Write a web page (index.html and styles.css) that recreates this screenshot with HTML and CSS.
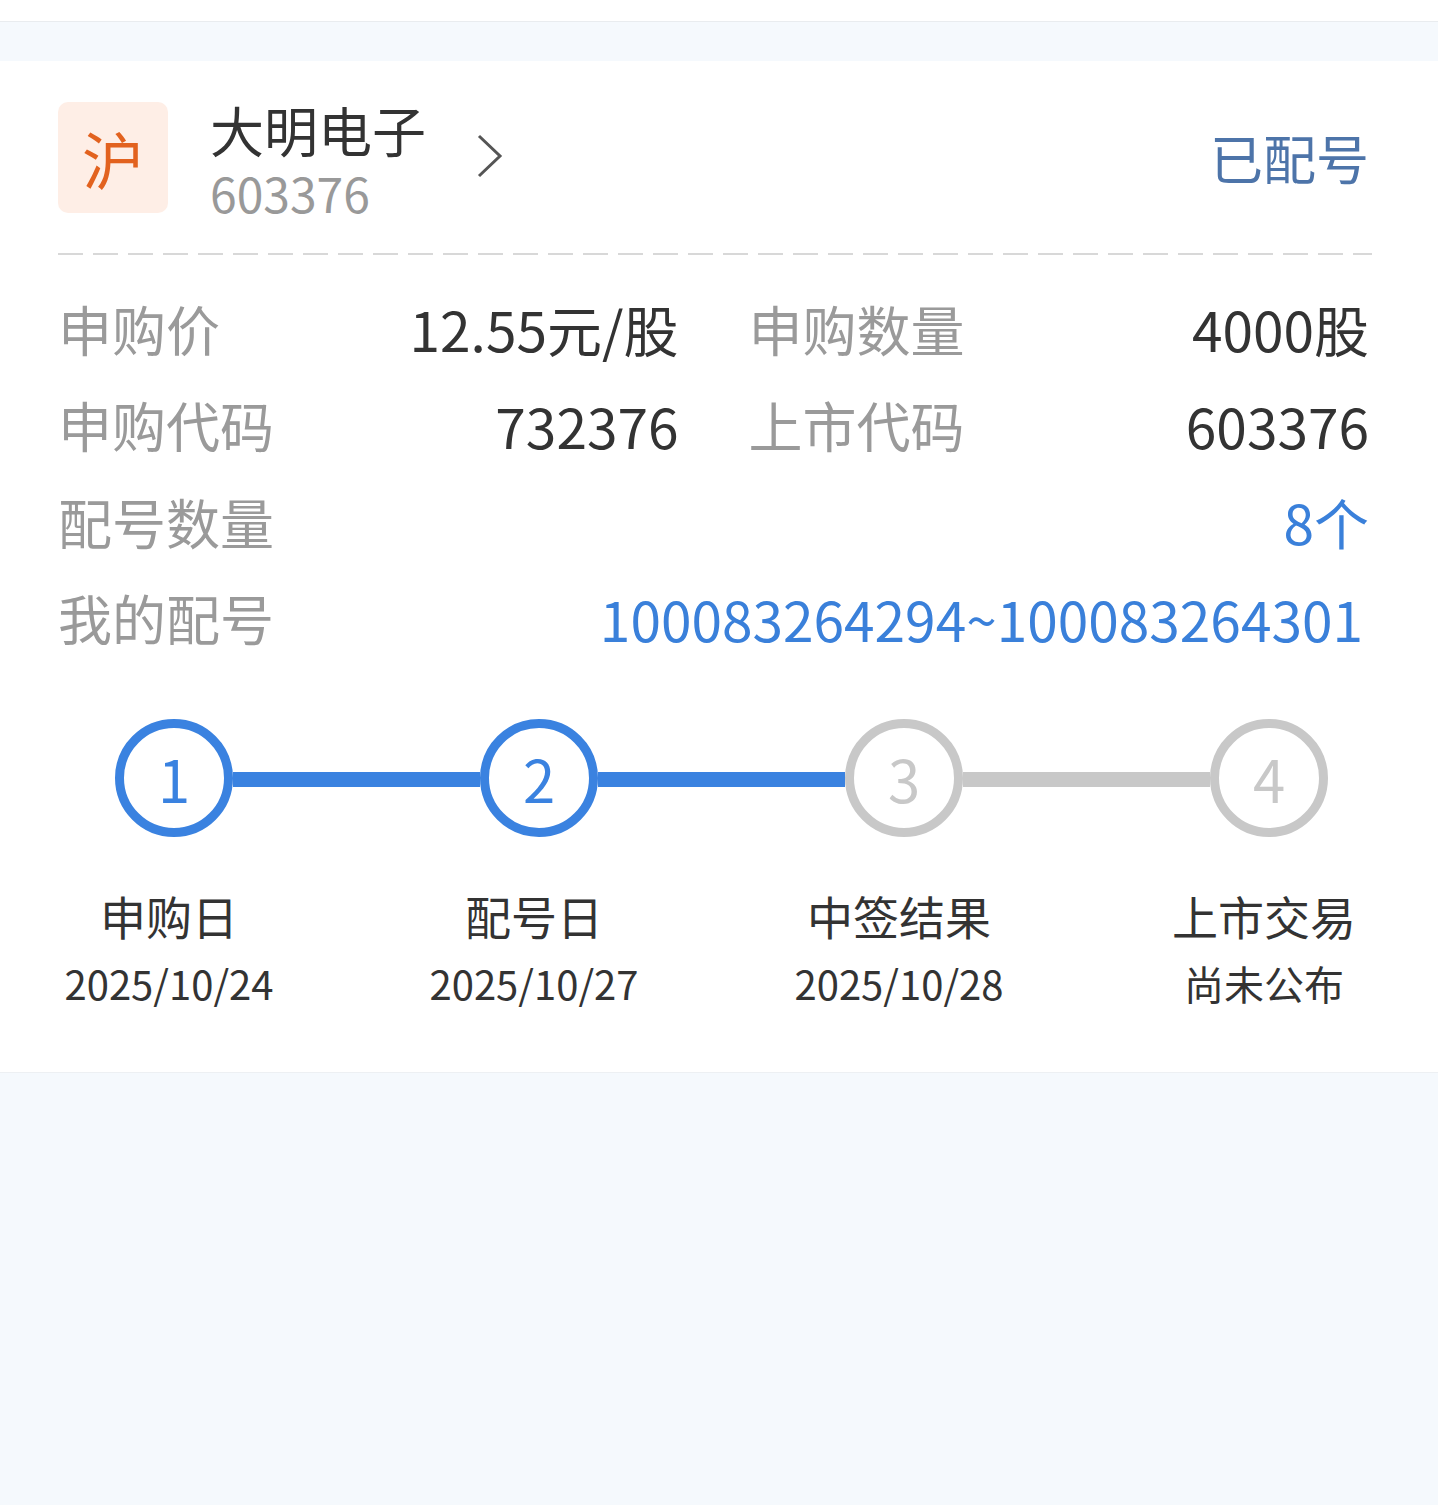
FILE: index.html
```html
<!DOCTYPE html>
<html lang="zh-CN">
<head>
<meta charset="utf-8">
<title>新股配号</title>
<link rel="stylesheet" href="styles.css">
</head>
<body>
<div class="topbar"></div>
<div class="card">
  <div class="header">
    <div class="badge">沪</div>
    <div class="stock">
      <div class="stock-name">大明电子</div>
      <div class="stock-code">603376</div>
    </div>
    <svg class="chevron" width="26" height="44" viewBox="0 0 26 44"><polyline points="2,2 23,22 2,42" fill="none" stroke="#555" stroke-width="3"/></svg>
    <div class="status">已配号</div>
  </div>
  <div class="dash"></div>
  <div class="info">
    <div class="cell"><span class="label">申购价</span><span class="value">12.55元/股</span></div>
    <div class="cell"><span class="label">申购数量</span><span class="value">4000股</span></div>
    <div class="cell"><span class="label">申购代码</span><span class="value">732376</span></div>
    <div class="cell"><span class="label">上市代码</span><span class="value">603376</span></div>
    <div class="cell wide"><span class="label">配号数量</span><span class="value blue">8个</span></div>
    <div class="cell wide"><span class="label">我的配号</span><span class="value blue range">100083264294~100083264301</span></div>
  </div>
  <div class="steps">
    <div class="circle done">1</div>
    <div class="bar done"></div>
    <div class="circle done">2</div>
    <div class="bar done"></div>
    <div class="circle">3</div>
    <div class="bar"></div>
    <div class="circle">4</div>
    <div class="step-text c1"><div class="step-title">申购日</div><div class="step-date">2025/10/24</div></div>
    <div class="step-text c3"><div class="step-title">配号日</div><div class="step-date">2025/10/27</div></div>
    <div class="step-text c5"><div class="step-title">中签结果</div><div class="step-date">2025/10/28</div></div>
    <div class="step-text c7"><div class="step-title">上市交易</div><div class="step-date">尚未公布</div></div>
  </div>
</div>
</body>
</html>
```

FILE: styles.css
```css
* { box-sizing: border-box; }
html, body {
  margin: 0;
  padding: 0;
  background: #f5f9fd;
  font-family: "Noto Sans CJK SC", "Noto Sans", sans-serif;
  color: #333;
}
.topbar {
  height: 22px;
  background: #fff;
  border-bottom: 1px solid #e9ecef;
}
.card {
  margin-top: 39px;
  background: #fff;
  padding: 41px 66px 0 58px;
  height: 1012px;
  border-bottom: 1px solid #edf0f3;
}
.header {
  display: flex;
  align-items: center;
  height: 111px;
}
.badge {
  width: 110px;
  height: 111px;
  border-radius: 10px;
  background: #feeee6;
  color: #e2621f;
  font-size: 62px;
  display: flex;
  align-items: center;
  justify-content: center;
  line-height: 1;
}
.stock {
  margin-left: 42px;
  display: flex;
  flex-direction: column;
  align-self: stretch;
}
.stock-name {
  font-size: 54px;
  line-height: 56px;
  color: #333;
}
.stock-code {
  font-size: 48px;
  line-height: 48px;
  margin-top: 10px;
  color: #999;
}
.chevron {
  margin-left: 51px;
  margin-top: -4px;
}
.status {
  margin-left: auto;
  font-size: 53px;
  color: #4d74a9;
  line-height: 1;
  padding-right: 3px;
}
.dash {
  margin-top: 40px;
  height: 2px;
  background: repeating-linear-gradient(to right, #d8d8d8 0 25px, transparent 25px 35px);
}
.info {
  margin-top: 25px;
  display: grid;
  grid-template-columns: 1fr 1fr;
  column-gap: 67px;
}
.cell {
  display: flex;
  justify-content: space-between;
  align-items: center;
  height: 96.5px;
}
.cell.wide { grid-column: 1 / 3; }
.label { color: #9a9a9a; font-size: 54px; }
.value { color: #333; font-size: 55px; padding-right: 3px; }
.value.blue { color: #3a80da; }
.value.range { padding-right: 9px; }
.steps {
  margin-top: 53px;
  margin-left: 57px;
  display: grid;
  grid-template-columns: 118px 247px 118px 247px 118px 247px 118px;
  grid-template-rows: 118px auto;
}
.circle {
  width: 118px;
  height: 118px;
  border-radius: 50%;
  border: 9px solid #c8c8c8;
  color: #c8c8c8;
  font-size: 58px;
  display: flex;
  align-items: center;
  justify-content: center;
  line-height: 1;
}
.circle.done {
  border-color: #3a82e0;
  color: #3a82e0;
}
.bar {
  align-self: center;
  height: 15px;
  margin-top: 3px;
  background: #c8c8c8;
}
.bar.done { background: #3a82e0; }
.step-text {
  grid-row: 2;
  margin: 0 -120px 0 -130px;
  text-align: center;
  padding-top: 48px;
}
.c1 { grid-column: 1; }
.c3 { grid-column: 3; }
.c5 { grid-column: 5; }
.c7 { grid-column: 7; }
.step-title {
  font-size: 46px;
  line-height: 60px;
  color: #333;
}
.step-date {
  font-size: 40px;
  line-height: 76px;
  color: #333;
}
```
